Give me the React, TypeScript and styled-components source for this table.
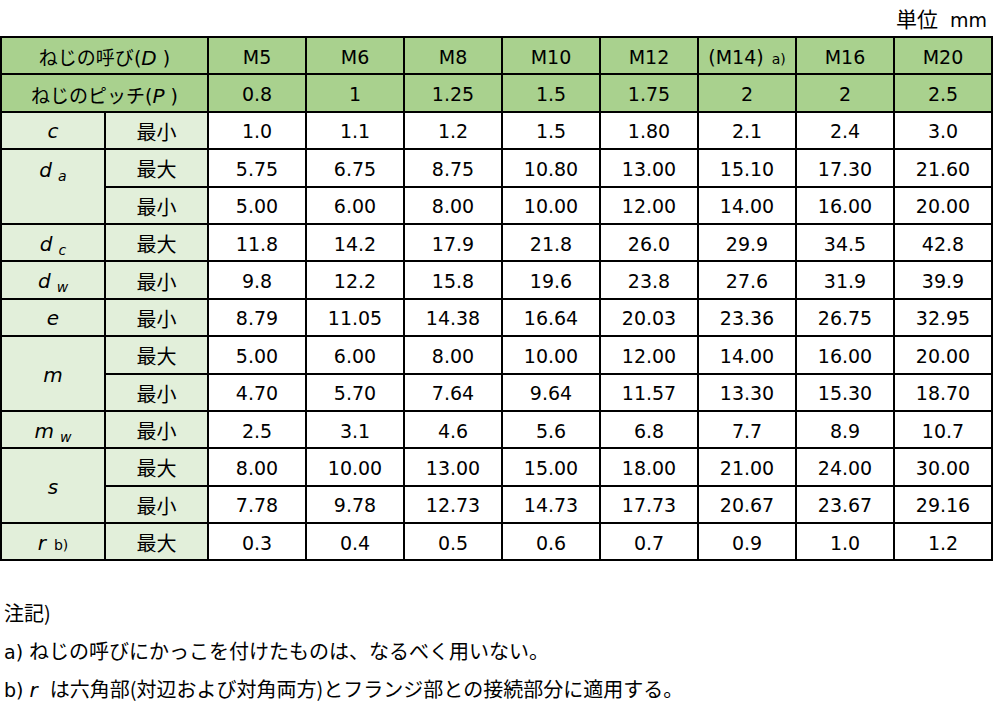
import React from 'react'
import styled, { createGlobalStyle } from 'styled-components'

const GlobalStyle = createGlobalStyle`
  body {
    margin: 0;
    background: #ffffff;
    font-family: "DejaVu Sans", "Noto Sans CJK JP", sans-serif;
    color: #000000;
  }
`

const Page = styled.div`
  width: 994px;
  height: 707px;
  overflow: hidden;
`

const Unit = styled.div`
  height: 36px;
  line-height: 36px;
  font-size: 19px;
  text-align: right;
  padding-right: 7px;
  white-space: pre;
`

const Table = styled.table`
  border-collapse: collapse;
  table-layout: fixed;
  width: 993px;
  margin-left: 0;
`

const Row = styled.tr`
  height: 37.4px;
`

const Cell = styled.td<{ $tone?: 'head' | 'label' | 'value'; $top?: boolean }>`
  border: 2px solid #000;
  padding: 2px 0 0;
  font-size: 19px;
  text-align: center;
  white-space: nowrap;
  vertical-align: ${p => (p.$top ? 'top' : 'middle')};
  line-height: ${p => (p.$top ? '36px' : 'normal')};
  background: ${p =>
    p.$tone === 'head' ? '#a9d18e' : p.$tone === 'label' ? '#e2efda' : '#ffffff'};
`

const Jp = styled.span<{ $size?: number }>`
  font-family: "Noto Sans CJK JP", sans-serif;
  font-size: ${p => p.$size || 20}px;
`

const Sym = styled.i`
  font-style: italic;
  font-size: 20px;
`

const Sub = styled.i`
  font-style: italic;
  font-size: 14px;
  margin-left: 6px;
  position: relative;
  top: 4px;
`

const Mark = styled.span`
  font-size: 14px;
  margin-left: 8px;
`

const Notes = styled.div`
  margin-top: 36px;
  padding-left: 4px;
  display: flex;
  flex-direction: column;
  gap: 5px;
  font-size: 19px;
`

const NoteLine = styled.div`
  line-height: 32px;
  white-space: pre;
`

const sizes = ['M5', 'M6', 'M8', 'M10', 'M12', '(M14)', 'M16', 'M20']
const pitch = ['0.8', '1', '1.25', '1.5', '1.75', '2', '2', '2.5']

type BodyRow = {
  sym?: React.ReactNode
  span?: number
  top?: boolean
  kind: string
  values: string[]
}

const rows: BodyRow[] = [
  { sym: <Sym>c</Sym>, kind: '最小', values: ['1.0', '1.1', '1.2', '1.5', '1.80', '2.1', '2.4', '3.0'] },
  { sym: <><Sym>d</Sym><Sub>a</Sub></>, span: 2, top: true, kind: '最大', values: ['5.75', '6.75', '8.75', '10.80', '13.00', '15.10', '17.30', '21.60'] },
  { kind: '最小', values: ['5.00', '6.00', '8.00', '10.00', '12.00', '14.00', '16.00', '20.00'] },
  { sym: <><Sym>d</Sym><Sub>c</Sub></>, kind: '最大', values: ['11.8', '14.2', '17.9', '21.8', '26.0', '29.9', '34.5', '42.8'] },
  { sym: <><Sym>d</Sym><Sub>w</Sub></>, kind: '最小', values: ['9.8', '12.2', '15.8', '19.6', '23.8', '27.6', '31.9', '39.9'] },
  { sym: <Sym>e</Sym>, kind: '最小', values: ['8.79', '11.05', '14.38', '16.64', '20.03', '23.36', '26.75', '32.95'] },
  { sym: <Sym>m</Sym>, span: 2, kind: '最大', values: ['5.00', '6.00', '8.00', '10.00', '12.00', '14.00', '16.00', '20.00'] },
  { kind: '最小', values: ['4.70', '5.70', '7.64', '9.64', '11.57', '13.30', '15.30', '18.70'] },
  { sym: <><Sym>m</Sym><Sub>w</Sub></>, kind: '最小', values: ['2.5', '3.1', '4.6', '5.6', '6.8', '7.7', '8.9', '10.7'] },
  { sym: <Sym>s</Sym>, span: 2, kind: '最大', values: ['8.00', '10.00', '13.00', '15.00', '18.00', '21.00', '24.00', '30.00'] },
  { kind: '最小', values: ['7.78', '9.78', '12.73', '14.73', '17.73', '20.67', '23.67', '29.16'] },
  { sym: <><Sym>r</Sym><Mark>b)</Mark></>, kind: '最大', values: ['0.3', '0.4', '0.5', '0.6', '0.7', '0.9', '1.0', '1.2'] },
]

const App = () => {
  return (
    <Page>
      <GlobalStyle />
      <Unit><Jp $size={21}>単位</Jp>{'  mm'}</Unit>
      <Table>
        <colgroup>
          <col style={{ width: 104 }} />
          <col style={{ width: 103 }} />
          {sizes.map(s => <col key={s} style={{ width: 98 }} />)}
        </colgroup>
        <tbody>
          <Row>
            <Cell $tone="head" colSpan={2}><Jp $size={19}>ねじの呼び</Jp>(<Sym>D</Sym> )</Cell>
            {sizes.map(s => (
              <Cell key={s} $tone="head">
                {s}{s === '(M14)' && <Mark>a)</Mark>}
              </Cell>
            ))}
          </Row>
          <Row>
            <Cell $tone="head" colSpan={2}><Jp $size={19}>ねじのピッチ</Jp>(<Sym>P</Sym> )</Cell>
            {pitch.map((p, i) => <Cell key={i} $tone="head">{p}</Cell>)}
          </Row>
          {rows.map((r, i) => (
            <Row key={i}>
              {r.sym && (
                <Cell $tone="label" rowSpan={r.span || 1} $top={r.top}>{r.sym}</Cell>
              )}
              <Cell $tone="label"><Jp>{r.kind}</Jp></Cell>
              {r.values.map((v, j) => <Cell key={j}>{v}</Cell>)}
            </Row>
          ))}
        </tbody>
      </Table>
      <Notes>
        <NoteLine><Jp>注記)</Jp></NoteLine>
        <NoteLine>a) <Jp>ねじの呼びにかっこを付けたものは、なるべく用いない。</Jp></NoteLine>
        <NoteLine>b) <Sym>r</Sym>  <Jp>は六角部(対辺および対角両方)とフランジ部との接続部分に適用する。</Jp></NoteLine>
      </Notes>
    </Page>
  )
}

export default App
